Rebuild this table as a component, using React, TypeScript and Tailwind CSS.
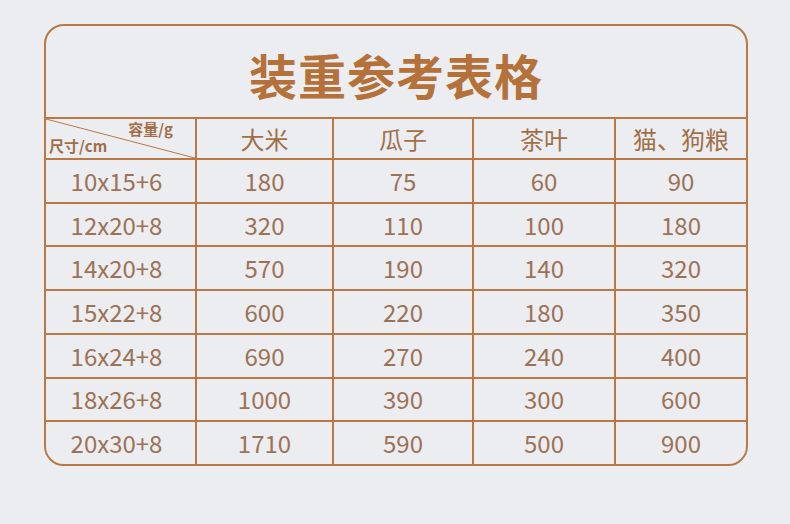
const rows: string[][] = [
  ['10x15+6', '180', '75', '60', '90'],
  ['12x20+8', '320', '110', '100', '180'],
  ['14x20+8', '570', '190', '140', '320'],
  ['15x22+8', '600', '220', '180', '350'],
  ['16x24+8', '690', '270', '240', '400'],
  ['18x26+8', '1000', '390', '300', '600'],
  ['20x30+8', '1710', '590', '500', '900'],
];

const heads = ['大米', '瓜子', '茶叶', '猫、狗粮'];

const App = () => {
  return (
    <div
      className="w-[790px] h-[524px] bg-[#ecedf0] pl-[44px] pt-[24px]"
      style={{ fontFamily: '"Noto Sans CJK SC", "Noto Sans", sans-serif' }}
    >
      <div className="w-[704px] h-[442px] border-2 border-[#b97844] rounded-[20px] overflow-hidden flex flex-col">
        <div className="h-[91px] flex items-center justify-center pt-[5px]">
          <h1 className="text-[48px] font-bold text-[#b4713a] tracking-[1px] leading-none">装重参考表格</h1>
        </div>

        <div className="flex-1 border-t-2 border-[#b97844] bg-[#b97844] grid grid-cols-[149px_135px_138px_140px_130px] grid-rows-[39px_repeat(7,1fr)] gap-[2px]">
          <div className="relative bg-[#ecedf0] text-[#a06f48] font-bold">
            <svg className="absolute inset-0 w-full h-full" preserveAspectRatio="none" viewBox="0 0 100 100">
              <line x1="0" y1="0" x2="100" y2="100" stroke="#b97844" strokeWidth="1" vectorEffect="non-scaling-stroke" />
            </svg>
            <span className="absolute right-[22px] top-[1px] text-[15px] leading-[18px]">容量/g</span>
            <span className="absolute left-[3px] bottom-[3px] text-[15px] leading-[18px]">尺寸/cm</span>
          </div>
          {heads.map((h) => (
            <div key={h} className="bg-[#ecedf0] flex items-center justify-center text-[24px] text-[#a06f48]">
              {h}
            </div>
          ))}

          {rows.map((r) =>
            r.map((c, i) => (
              <div
                key={r[0] + i}
                className={`bg-[#ecedf0] flex items-center justify-center text-[24px] text-[#9c7256] ${i === 0 ? 'pr-[8px]' : ''}`}
              >
                {c}
              </div>
            ))
          )}
        </div>
      </div>
    </div>
  );
};

export default App;
